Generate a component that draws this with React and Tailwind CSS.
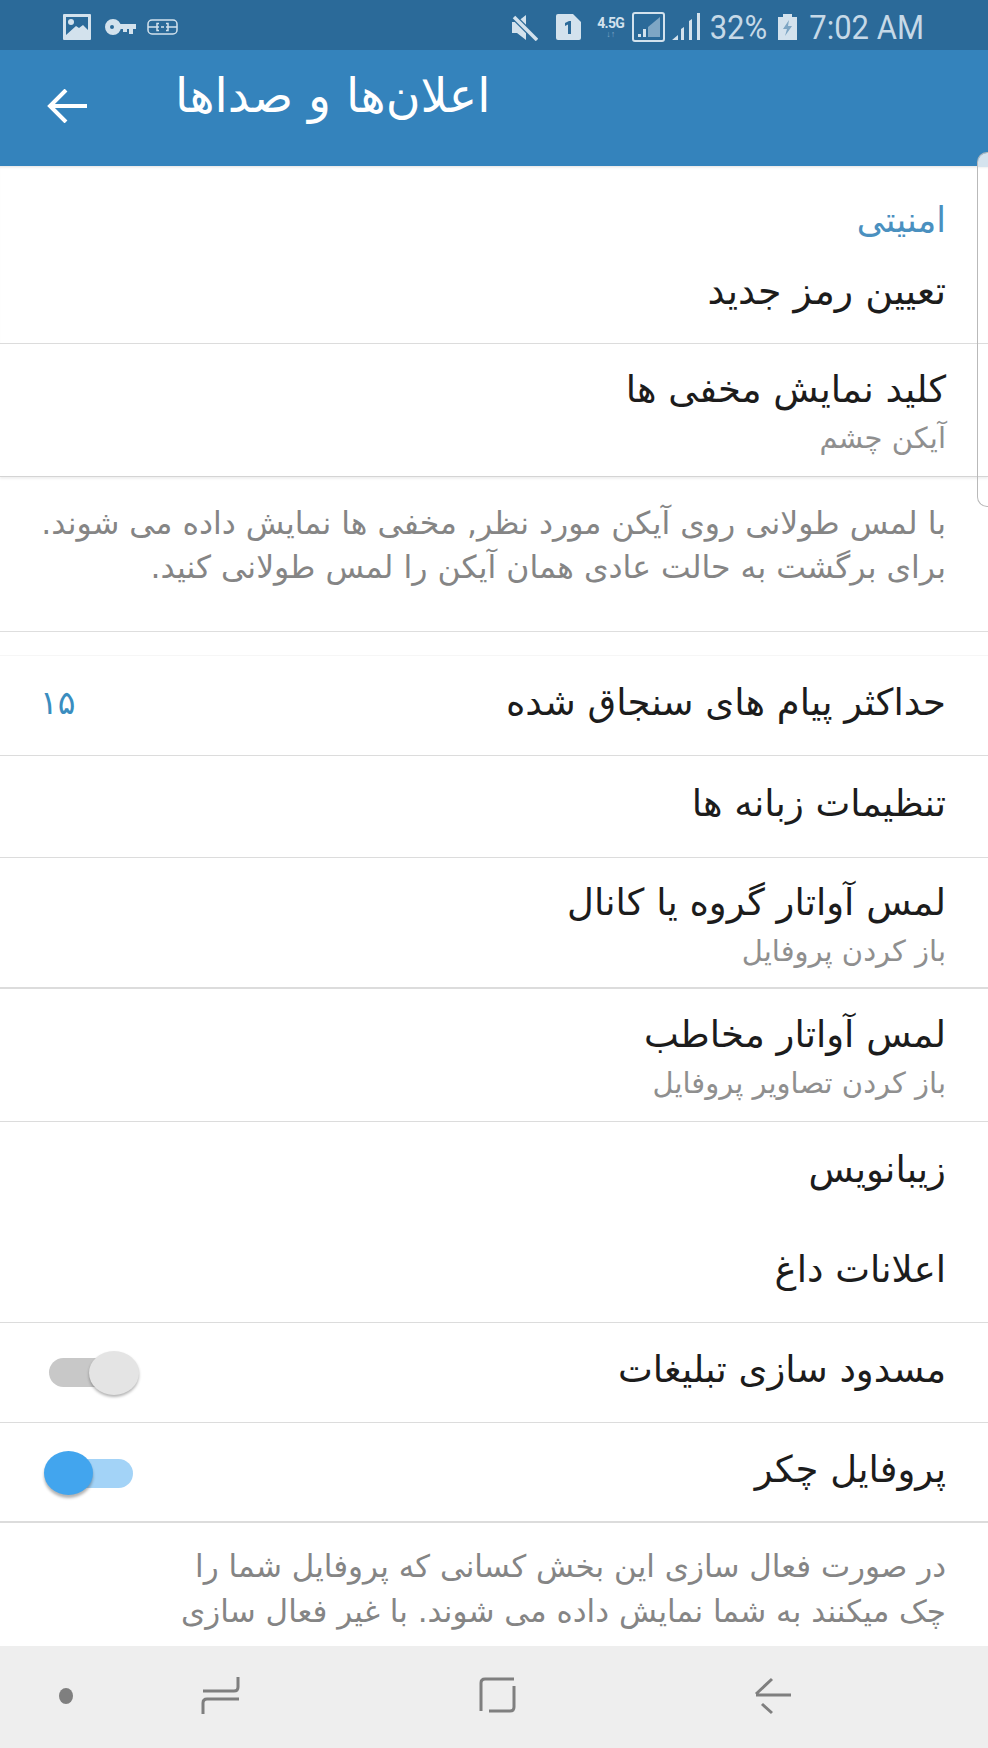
const Row = ({ title, sub, value, toggle, h, border = 'border-b border-[#dcdcdc]' }) => (
  <div dir="rtl" className={`flex items-center justify-between pr-[42px] pl-[42px] bg-white shrink-0 ${sub ? 'pt-[3px]' : 'pb-[5px]'} ${h} ${border}`}>
    <div className="flex flex-col">
      <div className="text-[37px] leading-[44px] text-[#1c1c1c]">{title}</div>
      {sub && <div className="mt-[9px] text-[29px] leading-[34px] text-[#8f8f8f]">{sub}</div>}
    </div>
    {value && <div className="-ml-[2px] text-[33px] text-[#3a8dbf]">{value}</div>}
    {toggle}
  </div>
);

const ToggleOff = () => (
  <div dir="ltr" className="relative ml-[7px] mt-[5px] w-[90px] h-[44px] flex items-center">
    <div className="w-[70px] h-[29px] rounded-full bg-[#c8c8c8]" />
    <div className="absolute right-0 top-0 w-[50px] h-[44px] rounded-[50%] bg-[#e4e4e4] shadow-[0_2px_3px_rgba(0,0,0,0.3)]" />
  </div>
);

const ToggleOn = () => (
  <div dir="ltr" className="relative ml-[2px] mt-[7px] w-[89px] h-[44px] flex items-center">
    <div className="w-[76px] h-[29px] rounded-full bg-[#a3d3f7] ml-[13px]" />
    <div className="absolute left-0 top-0 w-[49px] h-[44px] rounded-[50%] bg-[#42a5ee] shadow-[0_3px_3px_rgba(0,0,0,0.3)]" />
  </div>
);

export default function App() {
  return (
    <div className="relative w-[988px] h-[1748px] overflow-hidden flex flex-col bg-white font-['DejaVu_Sans',sans-serif]">
      {/* status bar */}
      <div className="h-[50px] shrink-0 bg-[#2b6a99] flex items-center pt-[4px] pl-[63px] pr-[64px] text-[#d3e2ed]">
        <svg width="28" height="26" viewBox="0 0 28 26">
          <rect width="28" height="26" rx="1" fill="#d3e2ed" />
          <path d="M3 3h22v13l-5-5-4 3-3-2-10 9z" fill="#2b6a99" />
          <circle cx="8" cy="8" r="3" fill="#d3e2ed" />
        </svg>
        <svg className="ml-[14px]" width="31" height="16" viewBox="0 0 31 16" fill="#d3e2ed">
          <path d="M8 0a8 8 0 1 1 0 16A8 8 0 0 1 8 0zm-1 6a2 2 0 1 0 0 4 2 2 0 0 0 0-4z" fillRule="evenodd" />
          <path d="M14 5h17v5h-3v5h-4v-5h-2v3h-4v-3h-4z" />
        </svg>
        <svg className="ml-[11px]" width="31" height="16" viewBox="0 0 31 16" fill="none" stroke="#d3e2ed" strokeWidth="1.5">
          <rect x="1" y="1" width="29" height="14" rx="4" />
          <path d="M1 8h11M19 8h11M12 4.5h-2v7h2M19 4.5h2v7h-2M14 8h3" />
        </svg>
        <div className="flex-1" />
        <svg width="27" height="27" viewBox="0 0 27 27" fill="#d3e2ed">
          <path d="M1 8h5l9-7v25l-9-7H1z" />
          <path d="M2 2l24 24" stroke="#2b6a99" strokeWidth="6" />
          <path d="M3 3l23 23" stroke="#d3e2ed" strokeWidth="3.5" />
        </svg>
        <svg className="ml-[18px]" width="25" height="26" viewBox="0 0 25 26">
          <path d="M2 0h15l8 8v16q0 2-2 2H2q-2 0-2-2V2q0-2 2-2z" fill="#d3e2ed" />
          <path d="M9 9l4-2h2v13h-3V10.500l-3 1.500z" fill="#2b6a99" />
        </svg>
        <div className="ml-[14px] flex flex-col items-center w-[32px] leading-none">
          <span className="text-[14px] font-bold font-['Roboto'] tracking-tighter text-[#d3e2ed]">4.5G</span>
          <span className="text-[9px] font-['Roboto'] text-[#7ea6c4]">↓↑</span>
        </div>
        <svg className="ml-[5px]" width="33" height="30" viewBox="0 0 33 30" fill="none">
          <rect x="1" y="1" width="31" height="28" rx="2" stroke="#d3e2ed" strokeWidth="2" />
          <path d="M6 25h3v-3H6zM11 25h3v-8h-3z" fill="#d3e2ed" />
          <path d="M16 25V15L28 5v20z" fill="#7ea6c4" />
        </svg>
        <svg className="ml-[6px]" width="29" height="28" viewBox="0 0 29 28" fill="#d3e2ed">
          <path d="M1 27l6-5v5zM10 27V16l3-2v13zM18 27V8l3-2v21zM26 27V0h3v27z" />
        </svg>
        <span className="ml-[10px] text-[31px] leading-none font-['Roboto'] text-[#c6d9e7] scale-y-[1.1]">32%</span>
        <svg className="ml-[11px]" width="19" height="26" viewBox="0 0 19 26" fill="#d3e2ed">
          <path d="M5 0h9v3h5v23H0V3h5z" />
          <path d="M11 6l-6 9h4l-2 7 7-10h-4z" fill="#7ea6c4" />
        </svg>
        <span className="ml-[12px] text-[31px] leading-none font-['Roboto'] text-[#c6d9e7] scale-y-[1.1]">7:02 AM</span>
      </div>

      {/* app bar */}
      <div className="h-[116px] shrink-0 bg-[#3483bc] flex items-start pl-[47px] text-white">
        <svg className="mt-[39px]" width="40" height="34" viewBox="0 0 40 34" fill="none" stroke="white" strokeWidth="4">
          <path d="M40 17H3M19 1L3 17l16 16" />
        </svg>
        <div dir="rtl" className="ml-[88px] mt-[18px] text-[47.500px] leading-[56px] whitespace-nowrap">اعلان‌ها و صداها</div>
      </div>

      {/* security */}
      <div className="h-[178px] shrink-0 border-b border-[#dcdcdc] shadow-[inset_0_3px_3px_-2px_rgba(0,0,0,0.12)]" dir="rtl">
        <div className="pt-[30px] pr-[42px] text-[35px] leading-[48px] text-[#4a90bf]">امنیتی</div>
        <div className="pt-[25px] pr-[42px] text-[38px] leading-[44px] text-[#1c1c1c]">تعیین رمز جدید</div>
      </div>
      <Row h="h-[133px]" title="کلید نمایش مخفی ها" sub="آیکن چشم" border="border-b border-[#d4d4d4] shadow-[0_2px_2px_rgba(0,0,0,0.06)]" />

      <div dir="rtl" className="h-[155px] shrink-0 pt-[24px] pr-[42px] pl-[42px] text-[31.500px] leading-[44px] text-[#858585] border-b border-[#dedede] shadow-[0_2px_2px_rgba(0,0,0,0.05)] whitespace-nowrap">
        <div>با لمس طولانی روی آیکن مورد نظر, مخفی ها نمایش داده می شوند.</div>
        <div>برای برگشت به حالت عادی همان آیکن را لمس طولانی کنید.</div>
      </div>
      <div className="h-[24px] shrink-0 bg-white border-b border-[#f6f6f6]" />

      <Row h="h-[100px]" title="حداکثر پیام های سنجاق شده" value="۱۵" />
      <Row h="h-[102px]" title="تنظیمات زبانه ها" />
      <Row h="h-[131px]" title="لمس آواتار گروه یا کانال" sub="باز کردن پروفایل" border="border-b-2 border-[#dcdcdc]" />
      <Row h="h-[133px]" title="لمس آواتار مخاطب" sub="باز کردن تصاویر پروفایل" />
      <Row h="h-[100px]" title="زیبانویس" border="" />
      <Row h="h-[101px]" title="اعلانات داغ" />
      <Row h="h-[100px]" title="مسدود سازی تبلیغات" toggle={<ToggleOff />} />
      <Row h="h-[100px]" title="پروفایل چکر" toggle={<ToggleOn />} border="border-b-2 border-[#dcdcdc]" />

      <div dir="rtl" className="flex-1 min-h-0 overflow-hidden pt-[21px] pr-[42px] text-[31px] leading-[45px] text-[#858585] whitespace-nowrap">
        <div>در صورت فعال سازی این بخش کسانی که پروفایل شما را</div>
        <div>چک میکنند به شما نمایش داده می شوند. با غیر فعال سازی</div>
      </div>

      {/* nav bar */}
      <div className="h-[102px] shrink-0 bg-[#eeeeee]">
        <svg width="988" height="102" viewBox="0 0 988 102" fill="none" stroke="#7f7f7f" strokeWidth="3">
          <ellipse cx="66" cy="50" rx="7" ry="8" fill="#7f7f7f" stroke="none" />
          <path d="M238 31V41q0 4-4 4H203M239 53H207q-4 0-4 4V68" />
          <path d="M481 65V37q0-4 4-4h29M514 40V61q0 4-4 4H489" />
          <path d="M772 33L756 48M756 49H791M762 58L772 67" />
        </svg>
      </div>

      {/* edge panel handle */}
      <div className="absolute top-[152px] right-0 w-[11px] h-[355px] rounded-l-[10px] border border-r-0 border-[#b9b9b9] overflow-hidden">
        <div className="h-[14px] bg-[#d5e3ee]" />
      </div>
    </div>
  );
}
